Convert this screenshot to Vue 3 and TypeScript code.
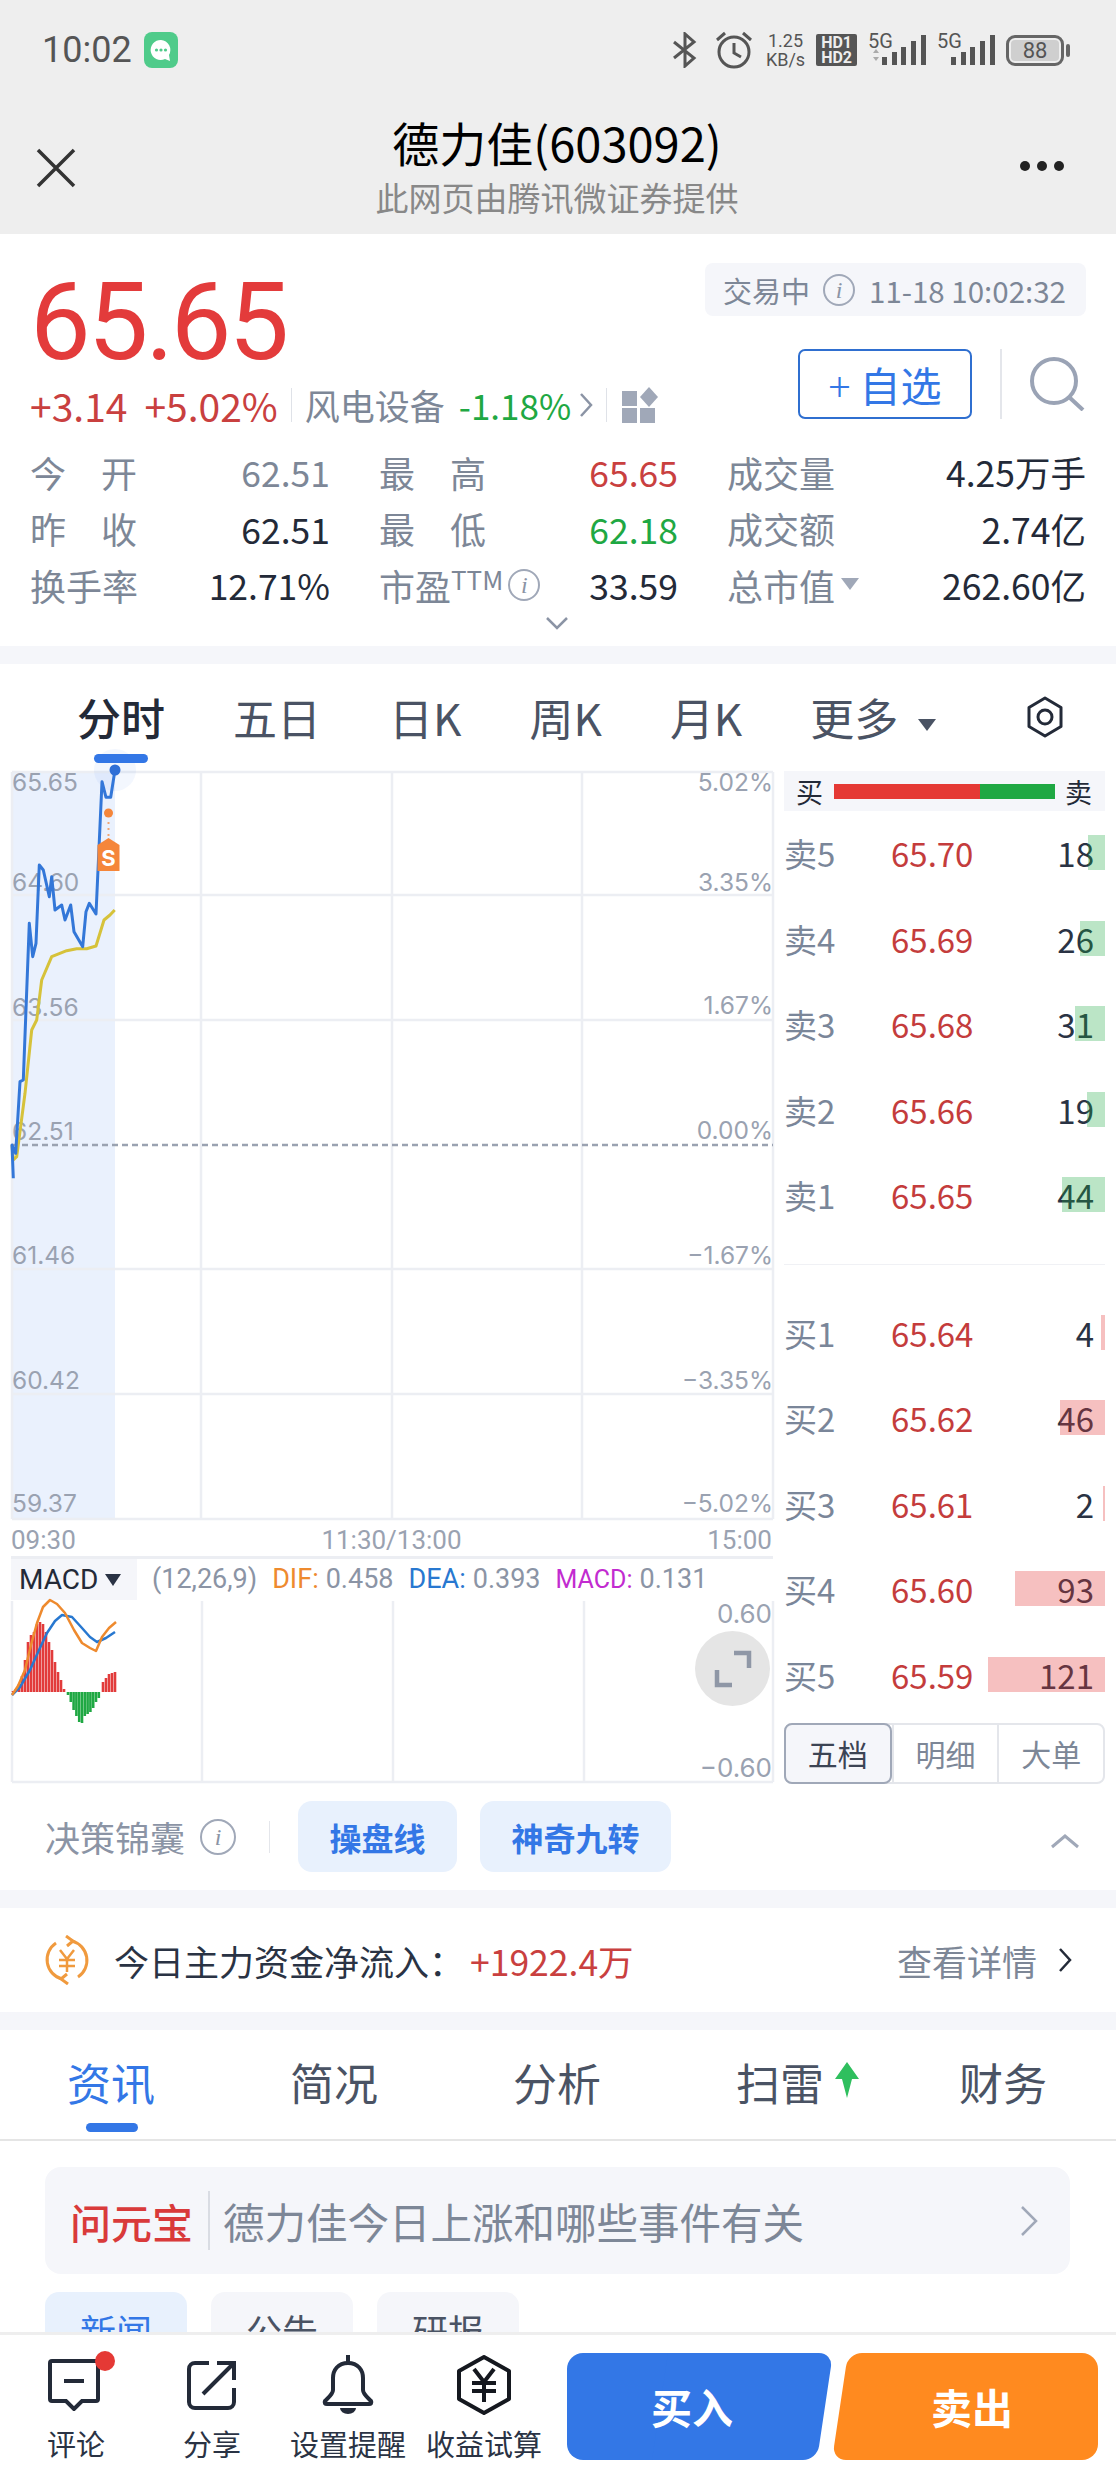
<script setup lang="ts">
// zoomed-crop coords of the intraday lines, converted to page px below
const toPage = (pts: number[][]) =>
  pts.map(([x, y]) => `${(x / 3).toFixed(1)},${(y / 3 + 660).toFixed(1)}`).join(" ");

const priceLine = toPage([
  [40, 1555], [36, 1455], [47, 1480], [60, 1265], [70, 1260], [88, 790], [98, 890], [108, 850],
  [118, 615], [130, 630], [148, 710], [155, 650], [165, 750], [185, 735], [195, 780], [212, 735],
  [222, 815], [248, 860], [258, 755], [268, 730], [288, 762], [306, 365], [318, 412], [332, 412],
  [344, 335],
]);
const avgLine = toPage([
  [36, 1455], [40, 1500], [50, 1490], [75, 1300], [95, 1110], [110, 1080], [125, 960], [155, 890],
  [200, 872], [230, 866], [260, 866], [288, 858], [312, 780], [330, 765], [344, 750],
]);

const hLines = [895, 1020, 1269, 1394];
const vLines = [201, 392, 582];
const leftLabels = [
  ["65.65", 782], ["64.60", 882], ["63.56", 1007], ["62.51", 1131],
  ["61.46", 1255], ["60.42", 1380], ["59.37", 1503],
] as const;
const rightLabels = [
  ["5.02%", 782], ["3.35%", 882], ["1.67%", 1005], ["0.00%", 1130],
  ["−1.67%", 1255], ["−3.35%", 1380], ["−5.02%", 1503],
] as const;

const stats = [
  [{ l: "今开", v: "62.51", c: "muted", j: true }, { l: "最高", v: "65.65", c: "up", j: true }, { l: "成交量", v: "4.25万手", c: "" }],
  [{ l: "昨收", v: "62.51", c: "", j: true }, { l: "最低", v: "62.18", c: "down", j: true }, { l: "成交额", v: "2.74亿", c: "" }],
];

const sells = [
  ["卖5", "65.70", 18], ["卖4", "65.69", 26], ["卖3", "65.68", 31], ["卖2", "65.66", 19], ["卖1", "65.65", 44],
] as const;
const buys = [
  ["买1", "65.64", 4], ["买2", "65.62", 46], ["买3", "65.61", 2], ["买4", "65.60", 93], ["买5", "65.59", 121],
] as const;

// MACD histogram: [x, height], positive is up
const hist: number[][] = [];
[1, 3, 8, 16, 32, 50, 57, 60, 68, 70, 68, 60, 50, 42, 30, 20, 12, 3].forEach((h, i) => hist.push([13 + i * 3, h]));
[3, 10, 18, 24, 30, 31, 24, 22, 20, 16, 10, 6].forEach((h, i) => hist.push([68 + i * 2.8, -h]));
[10, 14, 18, 19, 20].forEach((h, i) => hist.push([103 + i * 3, h]));

const difLine = "12,1695 18,1686 25,1670 31,1645 37,1623 43,1607 50,1600 57,1604 65,1613 74,1630 82,1643 90,1648 96,1651 102,1637 109,1628 116,1622";
const deaLine = "12,1695 20,1687 30,1670 39,1650 47,1633 55,1621 62,1615 72,1617 82,1628 90,1637 97,1642 106,1638 115,1632";

const tabs = ["分时", "五日", "日K", "周K", "月K"];
const newsTabs = ["资讯", "简况", "分析", "扫雷", "财务"];
</script>

<template>
  <div class="page">
    <div class="main">
      <header class="top">
        <div class="status">
          <span class="clock">10:02</span>
          <svg class="app" width="34" height="36" viewBox="0 0 34 36">
            <rect width="34" height="36" rx="8" fill="#4fcb8a" />
            <path d="M17 8a10 10 0 1 0 4 19l5 2-1-6a10 10 0 0 0-8-15z" fill="#fff" />
            <circle cx="12.500" cy="18" r="1.600" fill="#4fcb8a" />
            <circle cx="17" cy="18" r="1.600" fill="#4fcb8a" />
            <circle cx="21.500" cy="18" r="1.600" fill="#4fcb8a" />
          </svg>
          <span class="grow"></span>
          <svg class="bt" width="28" height="36" viewBox="0 0 28 36" fill="none" stroke="#555" stroke-width="3">
            <path d="M3 10l20 16-9 8V2l9 8L3 26" />
          </svg>
          <svg width="42" height="40" viewBox="0 0 42 40" fill="none" stroke="#555" stroke-width="3">
            <circle cx="21" cy="22" r="15" />
            <path d="M21 13v10l7 4M4 10l8-7M38 10l-8-7" />
          </svg>
          <span class="speed">1.25<br />KB/s</span>
          <span class="hd">HD1<br />HD2</span>
          <svg class="signal" width="58" height="34" viewBox="0 0 58 34" fill="#555">
            <text x="0" y="15" class="five">5G</text>
            <path d="M5 20l3-4 3 4zM5 24l3 4 3-4z" fill="#aaa" />
            <rect x="14" y="24" width="5" height="8" /><rect x="24" y="19" width="5" height="13" />
            <rect x="33" y="14" width="5" height="18" /><rect x="43" y="8" width="5" height="24" />
            <rect x="53" y="2" width="5" height="30" />
          </svg>
          <svg class="signal" width="58" height="34" viewBox="0 0 58 34" fill="#555">
            <text x="0" y="15" class="five">5G</text>
            <rect x="14" y="24" width="5" height="8" /><rect x="24" y="19" width="5" height="13" />
            <rect x="33" y="14" width="5" height="18" /><rect x="43" y="8" width="5" height="24" />
            <rect x="53" y="2" width="5" height="30" />
          </svg>
          <span class="battery"><span class="level">88</span></span>
        </div>
        <div class="titlebar">
          <svg class="close" width="40" height="40" viewBox="0 0 40 40" stroke="#333" stroke-width="3.500">
            <path d="M2 2l36 36M38 2L2 38" />
          </svg>
          <div class="titles">
            <div class="title">德力佳(603092)</div>
            <div class="subtitle">此网页由腾讯微证券提供</div>
          </div>
          <div class="dots"><i></i><i></i><i></i></div>
        </div>
      </header>

      <section class="quote">
        <div class="quote-head">
          <div>
            <div class="price">65.65</div>
            <div class="change">
              <span class="up big">+3.14</span>
              <span class="up big pct">+5.02%</span>
              <i class="rule"></i>
              <span class="sector">风电设备</span>
              <span class="down sector-pct">-1.18%</span>
              <svg width="14" height="26" viewBox="0 0 14 26" fill="none" stroke="#8b94a5" stroke-width="2.500">
                <path d="M2 2l10 11L2 24" />
              </svg>
              <i class="rule second"></i>
              <svg width="38" height="36" viewBox="0 0 38 36" fill="#a0a8b8">
                <rect y="4" width="15" height="15" /><rect y="21" width="15" height="15" />
                <rect x="18" y="21" width="15" height="15" />
                <path d="M27 0l9 10-9 10-9-10z" />
              </svg>
            </div>
          </div>
          <div class="quote-side">
            <div class="trade-time">
              <span>交易中</span>
              <span class="info small"><em>i</em></span>
              <span class="stamp">11-18 10:02:32</span>
            </div>
            <div class="actions">
              <button class="watch"><span class="plus">+</span> 自选</button>
              <i class="vrule"></i>
              <svg width="56" height="54" viewBox="0 0 56 54" fill="none" stroke="#9aa3b5" stroke-width="4">
                <circle cx="25" cy="24" r="22" />
                <path d="M40 40l14 13" />
              </svg>
            </div>
          </div>
        </div>

        <div class="stats">
          <template v-for="(row, r) in stats" :key="r">
            <div v-for="cell in row" :key="cell.l" class="stat">
              <span class="label" :class="{ spread: cell.j }">{{ cell.l }}</span>
              <span class="value" :class="cell.c">{{ cell.v }}</span>
            </div>
          </template>
          <div class="stat">
            <span class="label">换手率</span><span class="value">12.71%</span>
          </div>
          <div class="stat">
            <span class="label pe">市盈<sup>TTM</sup><span class="info small"><em>i</em></span></span>
            <span class="value">33.59</span>
          </div>
          <div class="stat">
            <span class="label">总市值<i class="caret grey"></i></span><span class="value">262.60亿</span>
          </div>
        </div>
        <svg class="more" width="24" height="14" viewBox="0 0 24 14" fill="none" stroke="#8b94a5" stroke-width="2.500">
          <path d="M2 2l10 10L22 2" />
        </svg>
      </section>

      <section class="market">
        <nav class="chart-tabs">
          <span v-for="(t, i) in tabs" :key="t" class="chart-tab" :class="{ on: i === 0 }">{{ t }}</span>
          <span class="chart-tab">更多<i class="caret dark"></i></span>
          <svg class="gear" width="40" height="42" viewBox="0 0 40 42" fill="none" stroke="#232a38" stroke-width="3">
            <path d="M20 2l16 9.500v19L20 40 4 30.500v-19z" stroke-linejoin="round" />
            <circle cx="20" cy="21" r="7" />
          </svg>
        </nav>

        <div class="market-body">
          <div class="charts">
            <svg class="price-chart" width="784" height="759" viewBox="0 766 784 759">
              <rect x="12" y="772" width="103" height="747" fill="#eaf1fd" />
              <g stroke="#eceef3" stroke-width="2.500">
                <line v-for="y in hLines" :key="y" x1="12" x2="773" :y1="y" :y2="y" />
                <line x1="12" x2="773" y1="1519" y2="1519" />
                <line x1="12" x2="773" y1="772" y2="772" />
                <line v-for="x in vLines" :key="x" y1="772" y2="1519" :x1="x" :x2="x" />
                <line x1="773" x2="773" y1="772" y2="1519" />
                <line x1="12" x2="12" y1="772" y2="1519" />
              </g>
              <line x1="12" x2="773" y1="1145" y2="1145" stroke="#9aa2b1" stroke-width="2.500" stroke-dasharray="6 4" />
              <g class="axis">
                <text v-for="[t, y] in leftLabels" :key="t" x="12" :y="y + 9">{{ t }}</text>
                <text v-for="[t, y] in rightLabels" :key="t" x="773" :y="y + 9" text-anchor="end">{{ t }}</text>
              </g>
              <polyline :points="avgLine" fill="none" stroke="#d6c23a" stroke-width="3" stroke-linejoin="round" />
              <polyline :points="priceLine" fill="none" stroke="#3377d8" stroke-width="3" stroke-linejoin="round" />
              <circle cx="115" cy="770" r="21" fill="#3377e6" opacity=".06" />
              <circle cx="115" cy="770" r="5.500" fill="#2f6fd6" />
              <circle cx="108.500" cy="813" r="4.500" fill="#f5863a" />
              <line x1="108.500" x2="108.500" y1="822" y2="838" stroke="#f5863a" stroke-width="2" stroke-dasharray="2 4" opacity=".7" />
              <path d="M108.500 838l11 7v26h-22v-26z" fill="#f5863a" />
              <text x="108.500" y="866" class="tag">S</text>
            </svg>

            <div class="time-axis"><span>09:30</span><span>11:30/13:00</span><span>15:00</span></div>

            <div class="macd-head">
              <span class="macd-select">MACD<i class="caret dark small"></i></span>
              <span class="macd-text">(12,26,9)</span>
              <span class="macd-text dif">DIF:</span><span class="macd-text">0.458</span>
              <span class="macd-text dea">DEA:</span><span class="macd-text">0.393</span>
              <span class="macd-text mac">MACD:</span><span class="macd-text">0.131</span>
            </div>

            <div class="macd-chart">
              <svg width="784" height="183" viewBox="0 1601 784 183">
                <g stroke="#eceef3" stroke-width="2.500">
                  <line x1="12" x2="773" y1="1782" y2="1782" />
                  <line x1="12" x2="12" y1="1601" y2="1782" />
                  <line v-for="x in [202, 393, 584, 773]" :key="x" y1="1601" y2="1782" :x1="x" :x2="x" />
                </g>
                <g stroke-width="2.600">
                  <line
                    v-for="([x, h], i) in hist"
                    :key="i"
                    :x1="x"
                    :x2="x"
                    y1="1692"
                    :y2="1692 - h"
                    :stroke="h > 0 ? '#e23b3b' : '#1fa843'"
                  />
                </g>
                <polyline :points="deaLine" fill="none" stroke="#2878d0" stroke-width="2.500" stroke-linejoin="round" />
                <polyline :points="difLine" fill="none" stroke="#ee8a2e" stroke-width="2.500" stroke-linejoin="round" />
                <g class="axis big">
                  <text x="772" y="1623" text-anchor="end">0.60</text>
                  <text x="772" y="1777" text-anchor="end">−0.60</text>
                </g>
              </svg>
              <button class="expand">
                <svg width="36" height="36" viewBox="0 0 36 36" fill="none" stroke="#8f97a6" stroke-width="4.500">
                  <path d="M19 2h15v15M2 19v15h15" />
                </svg>
              </button>
            </div>
          </div>

          <aside class="book">
            <div class="ratio">
              <span>买</span>
              <div class="ratio-bar"><i></i><b></b></div>
              <span>卖</span>
            </div>
            <div class="side">
              <div v-for="[l, p, q] in sells" :key="l" class="level-row">
                <span class="lv">{{ l }}</span><span class="lp">{{ p }}</span><span class="lq">{{ q }}</span>
                <i class="vol green" :style="{ width: q * 0.97 + 'px' }"></i>
              </div>
            </div>
            <div class="split"></div>
            <div class="side">
              <div v-for="[l, p, q] in buys" :key="l" class="level-row">
                <span class="lv">{{ l }}</span><span class="lp">{{ p }}</span><span class="lq">{{ q }}</span>
                <i class="vol red" :style="{ width: q * 0.97 + 'px' }"></i>
              </div>
            </div>
            <div class="seg">
              <span class="active">五档</span><span>明细</span><span>大单</span>
            </div>
          </aside>
        </div>

        <div class="tips">
          <span class="tips-label">决策锦囊</span>
          <span class="info"><em>i</em></span>
          <i class="tips-rule"></i>
          <button class="chip">操盘线</button>
          <button class="chip wide">神奇九转</button>
          <svg class="collapse" width="30" height="16" viewBox="0 0 30 16" fill="none" stroke="#a0a8b8" stroke-width="3">
            <path d="M2 14L15 3l13 11" />
          </svg>
        </div>
      </section>

      <section class="flow">
        <svg width="46" height="50" viewBox="0 0 46 50" fill="none" stroke="#f09a3e" stroke-width="3">
          <path d="M28 6A20 20 0 0 1 34 42M18 44A20 20 0 0 1 12 8" />
          <path d="M22 1l7 5-6 5M24 49l-7-5 6-5" />
          <path d="M16 15l7 9 7-9M23 24v13M15 25h16M15 31h16" stroke-width="2.500" />
        </svg>
        <span class="flow-text">今日主力资金净流入：</span>
        <span class="flow-num">+1922.4万</span>
        <span class="grow"></span>
        <span class="flow-more">查看详情</span>
        <svg width="14" height="26" viewBox="0 0 14 26" fill="none" stroke="#232a38" stroke-width="2.500">
          <path d="M2 2l10 11L2 24" />
        </svg>
      </section>

      <section class="news">
        <nav class="news-tabs">
          <span v-for="(t, i) in newsTabs" :key="t" class="news-tab" :class="{ on: i === 0 }">
            {{ t }}
            <svg v-if="t === '扫雷'" class="arrow" width="26" height="36" viewBox="0 0 26 36">
              <path d="M13 0l12 17h-7l-5 19-5-19H1z" fill="#2fbf5e" />
            </svg>
          </span>
        </nav>
        <div class="ask">
          <span class="ask-brand">问元宝</span>
          <i class="ask-rule"></i>
          <span class="ask-text">德力佳今日上涨和哪些事件有关</span>
          <span class="grow"></span>
          <svg width="18" height="32" viewBox="0 0 18 32" fill="none" stroke="#a0a8b8" stroke-width="2.500">
            <path d="M2 2l14 14L2 30" />
          </svg>
        </div>
        <div class="subtabs">
          <span class="on">新闻</span><span>公告</span><span>研报</span>
        </div>
      </section>
    </div>

    <footer class="bar">
      <div class="bar-item">
        <span class="bar-icon">
          <svg width="56" height="52" viewBox="0 0 56 52" fill="none" stroke="#232a38" stroke-width="4">
            <path d="M4 2h44a2 2 0 0 1 2 2v36a2 2 0 0 1-2 2H34l-8 8-8-8H4a2 2 0 0 1-2-2V4a2 2 0 0 1 2-2z" />
            <path d="M16 22h20" />
          </svg>
          <i class="badge"></i>
        </span>
        <span class="bar-label">评论</span>
      </div>
      <div class="bar-item">
        <span class="bar-icon">
          <svg width="50" height="50" viewBox="0 0 50 50" fill="none" stroke="#232a38" stroke-width="4">
            <path d="M22 3H8a6 6 0 0 0-6 6v33a6 6 0 0 0 6 6h33a6 6 0 0 0 6-6V28" />
            <path d="M16 34L46 4M30 3h17v17" />
          </svg>
        </span>
        <span class="bar-label">分享</span>
      </div>
      <div class="bar-item">
        <span class="bar-icon">
          <svg width="56" height="60" viewBox="0 0 56 60" fill="none" stroke="#232a38" stroke-width="4">
            <path d="M28 8c-10 0-15 7-15 15v12c0 4-4 7-8 11-1 2 0 3 2 3h42c2 0 3-1 2-3-4-4-8-7-8-11V23c0-8-5-15-15-15z" />
            <path d="M28 0v8" />
            <path d="M20 53h16a8 6 0 0 1-16 0z" fill="#232a38" stroke="none" />
          </svg>
        </span>
        <span class="bar-label">设置提醒</span>
      </div>
      <div class="bar-item">
        <span class="bar-icon">
          <svg width="54" height="60" viewBox="0 0 54 60" fill="none" stroke="#15181f" stroke-width="4">
            <path d="M27 2l25 14v28L27 58 2 44V16z" stroke-linejoin="round" />
            <path d="M17 14l10 13 10-13M27 27v20M15 28h24M15 36h24" />
          </svg>
        </span>
        <span class="bar-label">收益试算</span>
      </div>
      <button class="trade buy-btn"><span>买入</span></button>
      <button class="trade sell-btn"><span>卖出</span></button>
    </footer>
  </div>
</template>

<style>
html,
body {
  margin: 0;
  background: #fff;
}
</style>

<style scoped>
.page {
  width: 1116px;
  height: 2480px;
  display: flex;
  flex-direction: column;
  overflow: hidden;
  background: #f5f6fa;
  font-family: "Noto Sans CJK SC", "Noto Sans", sans-serif;
  color: #232a38;
}
.main {
  flex: 1;
  min-height: 0;
  overflow: hidden;
}
.grow {
  flex: 1;
}
i,
em {
  font-style: normal;
}

/* top */
.top {
  height: 234px;
  background: #eeeeee;
}
.status {
  height: 100px;
  display: flex;
  align-items: center;
  gap: 11px;
  padding: 0 52px 0 42px;
  box-sizing: border-box;
  color: #555;
}
.clock {
  font: 36px/1 Roboto, sans-serif;
}
.app {
  margin-left: 1px;
}
.bt {
  margin-right: 3px;
}
.speed {
  font: 18px/19px Roboto, sans-serif;
  text-align: center;
}
.hd {
  background: #555;
  color: #eee;
  font: 700 16px/15px Roboto, sans-serif;
  padding: 1px 5px;
  border-radius: 2px;
}
.signal {
  overflow: visible;
}
.five {
  font: 20px Roboto, sans-serif;
}
.battery {
  width: 58px;
  height: 31px;
  border: 3px solid #666;
  border-radius: 9px;
  box-sizing: border-box;
  padding: 2px;
  display: flex;
  position: relative;
}
.battery::after {
  content: "";
  position: absolute;
  right: -9px;
  top: 6px;
  width: 4px;
  height: 13px;
  background: #666;
  border-radius: 2px;
}
.level {
  flex: 1;
  background: #cfcfcf;
  border-radius: 4px;
  font: 22px/21px Roboto, sans-serif;
  text-align: center;
  color: #555;
}
.titlebar {
  display: flex;
  align-items: flex-start;
  justify-content: space-between;
  padding: 0 52px 0 36px;
}
.close {
  margin-top: 48px;
}
.titles {
  text-align: center;
  margin-left: 18px;
}
.title {
  font-size: 47px;
  line-height: 60px;
  margin-top: 12px;
  color: #000;
}
.subtitle {
  font-size: 33px;
  line-height: 44px;
  color: #888;
  margin-top: 3px;
}
.dots {
  display: flex;
  gap: 7px;
  margin-top: 61px;
}
.dots i {
  width: 10px;
  height: 10px;
  border-radius: 50%;
  background: #222;
}

/* quote */
.quote {
  height: 412px;
  background: #fff;
  padding: 0 30px 0 30px;
  box-sizing: border-box;
  position: relative;
}
.quote-head {
  display: flex;
  justify-content: space-between;
  height: 209.500px;
}
.price {
  font: 108px/108px Roboto, sans-serif;
  letter-spacing: -3px;
  color: #e33b3b;
  margin: 34px 0 0 0;
}
.change {
  display: flex;
  align-items: center;
  font-size: 35px;
  line-height: 50px;
  margin-top: 4px;
  white-space: nowrap;
}
.up {
  color: #c9403f;
}
.big {
  font-size: 39px;
}
.down {
  color: #1fa843;
}
.muted {
  color: #7d8797;
}
.pct {
  margin-left: 17px;
}
.rule {
  width: 1px;
  height: 34px;
  background: #dfe2e8;
  margin: 0 13px;
}
.rule.second {
  margin: 0 15px 0 13px;
}
.sector {
  color: #7d8797;
  font-size: 35px;
}
.sector-pct {
  margin: 0 8px 0 14px;
}
.quote-side {
  width: 381px;
  padding-top: 29px;
}
.trade-time {
  height: 53px;
  background: #f5f6fa;
  border-radius: 8px;
  display: flex;
  align-items: center;
  padding-left: 18px;
  font-size: 29px;
  color: #7d8797;
  gap: 13px;
  white-space: nowrap;
}
.stamp {
  font-size: 29.500px;
  margin-left: 1px;
}
.info {
  width: 36px;
  height: 36px;
  border: 2.500px solid #a0a8b8;
  border-radius: 50%;
  box-sizing: border-box;
  display: inline-flex;
  align-items: center;
  justify-content: center;
  color: #8b94a5;
  flex: none;
}
.info em {
  font: italic 24px/1 "Liberation Serif", serif;
}
.info.small {
  width: 32px;
  height: 32px;
}
.actions {
  display: flex;
  align-items: center;
  margin: 33px 0 0 93px;
}
.watch {
  width: 174px;
  height: 70px;
  border: 2px solid #2f6fd0;
  border-radius: 7px;
  background: #fff;
  color: #3377e6;
  font: 41px/1 "Noto Sans CJK SC", sans-serif;
  padding: 0;
  flex: none;
}
.plus {
  font-weight: 300;
}
.vrule {
  width: 2px;
  height: 70px;
  background: #e4e6eb;
  margin: 0 27px 0 28px;
  flex: none;
}
.stats {
  display: grid;
  grid-template-columns: 300px 299px 359px;
  column-gap: 49px;
  grid-auto-rows: 56.500px;
}
.stat {
  display: flex;
  justify-content: space-between;
  align-items: center;
  font-size: 35.500px;
  white-space: nowrap;
}
.label {
  color: #7d8797;
  font-size: 36px;
  width: 107px;
  display: inline-block;
  position: relative;
}
.label.spread {
  text-align-last: justify;
}
.pe {
  display: flex;
  align-items: center;
}
.pe sup {
  font-size: 26px;
  line-height: 1;
  margin-top: -12px;
  vertical-align: baseline;
}
.pe .info {
  margin-left: 5px;
}
.caret {
  display: inline-block;
  border-left: 9px solid transparent;
  border-right: 9px solid transparent;
  border-top: 12px solid #a0a8b8;
}
.caret.grey {
  position: absolute;
  left: 114px;
  top: 19px;
}
.caret.dark {
  border-top-color: #4a5364;
  margin-left: 20px;
  vertical-align: 5px;
}
.caret.small {
  margin-left: 7px;
  vertical-align: 2px;
  border-top-color: #2a3344;
  border-left-width: 8px;
  border-right-width: 8px;
}
.more {
  position: absolute;
  left: 545px;
  top: 382px;
}

/* chart */
.market {
  margin-top: 18px;
  background: #fff;
  height: 1226px;
  overflow: hidden;
}
.chart-tabs {
  height: 102px;
  box-sizing: border-box;
  padding: 4px 0 0 77px;
  display: flex;
  align-items: center;
  gap: 68px;
  font-size: 44px;
  color: #4a5364;
  position: relative;
}
.chart-tab {
  position: relative;
  line-height: 56px;
  white-space: nowrap;
}
.chart-tab.on {
  color: #232a38;
  font-weight: 500;
}
.chart-tab.on::after {
  content: "";
  position: absolute;
  left: 17px;
  right: 17px;
  bottom: -18px;
  height: 9px;
  border-radius: 5px;
  background: #3377e6;
}
.gear {
  position: absolute;
  left: 1025px;
  top: 32px;
}
.market-body {
  display: flex;
}
.charts {
  width: 784px;
  flex: none;
}
.price-chart,
.macd-chart svg {
  display: block;
  overflow: visible;
}
.axis text {
  font: 24.500px Inter, sans-serif;
  fill: #9aa2b1;
}
.axis.big text {
  font-size: 26px;
}
.tag {
  font: 700 22px Inter, sans-serif;
  fill: #fff;
  text-anchor: middle;
}
.time-axis {
  height: 29px;
  margin: 0 12px 2px 11px;
  display: flex;
  justify-content: space-between;
  align-items: center;
  font: 26px/1 Roboto, sans-serif;
  color: #9aa2b1;
}
.macd-head {
  height: 41px;
  border-top: 3px solid #eceef3;
  display: flex;
  align-items: center;
  font: 27px/1 Roboto, sans-serif;
  margin-left: 11px;
  width: 762px;
  color: #8b94a5;
  white-space: nowrap;
}
.macd-select {
  width: 126px;
  height: 100%;
  background: #f5f6fa;
  padding-left: 8px;
  box-sizing: border-box;
  display: flex;
  align-items: center;
  color: #232a38;
  font-size: 28px;
  margin-right: 15px;
}
.macd-text {
  margin-right: 7px;
}
.dif {
  color: #ee8a2e;
  margin-left: 8px;
}
.dea {
  color: #2878d0;
  margin-left: 8px;
}
.mac {
  color: #c22bd0;
  margin-left: 8px;
  font-size: 25px;
}
.macd-chart {
  position: relative;
  height: 184px;
  margin-top: 1px;
}
.expand {
  position: absolute;
  left: 695px;
  top: 30px;
  width: 75px;
  height: 75px;
  border-radius: 50%;
  border: 0;
  background: #e5e5e5;
  display: flex;
  align-items: center;
  justify-content: center;
  padding: 0;
}

/* order book */
.book {
  width: 321px;
  margin: 5px 0 0 0;
}
.ratio {
  height: 40px;
  background: #f5f6fa;
  display: flex;
  align-items: center;
  justify-content: space-between;
  padding: 0 13px 0 12px;
  font-size: 27px;
  color: #232a38;
  line-height: 1;
  margin-bottom: -0.500px;
}
.ratio-bar {
  width: 221px;
  height: 15px;
  display: flex;
}
.ratio-bar i {
  flex: 146;
  background: #e53935;
}
.ratio-bar b {
  flex: 75;
  background: #1fa843;
}
.level-row {
  display: flex;
  align-items: center;
  position: relative;
  height: 85.500px;
  font-size: 33px;
  padding: 0 11px 0 0;
  box-sizing: border-box;
}
.lv {
  width: 107px;
  color: #7a8699;
}
.lp {
  color: #c43c3c;
}
.lq {
  margin-left: auto;
  color: #2a3344;
}
.vol {
  position: absolute;
  right: 0;
  top: 50%;
  height: 35px;
  margin-top: -18px;
}
.vol.green {
  background: rgba(31, 168, 67, 0.3);
}
.vol.red {
  background: rgba(227, 59, 59, 0.32);
}
.split {
  height: 1px;
  background: #f0f1f5;
  margin-top: 26px;
  margin-bottom: 25px;
}
.seg {
  height: 61px;
  margin-top: 5px;
  display: flex;
  border: 2px solid #e4e6eb;
  border-radius: 8px;
  box-sizing: border-box;
  font-size: 30px;
  color: #7d8797;
}
.seg span {
  flex: 1;
  display: flex;
  align-items: center;
  justify-content: center;
  border-left: 2px solid #e4e6eb;
}
.seg .active {
  background: #f5f6fa;
  border: 2px solid #a0a8b8;
  margin: -2px 0 -2px -2px;
  border-radius: 8px;
  color: #3c4454;
}
.tips {
  margin-top: 16px;
  padding-left: 45px;
  display: flex;
  align-items: center;
  height: 71px;
  position: relative;
}
.tips-label {
  font-size: 35px;
  color: #8b94a5;
  margin-right: 15px;
}
.tips-rule {
  width: 1px;
  height: 32px;
  background: #e4e6eb;
  margin: 0 28px 0 33px;
}
.chip {
  height: 71px;
  width: 159px;
  border: 0;
  border-radius: 14px;
  background: #e8f1fd;
  color: #3377e6;
  font: 700 32px/1 "Noto Sans CJK SC", sans-serif;
  padding: 0;
}
.chip.wide {
  width: 191px;
  margin-left: 23px;
}
.collapse {
  position: absolute;
  left: 1050px;
  top: 32px;
}

/* fund flow */
.flow {
  margin-top: 18px;
  height: 104px;
  background: #fff;
  display: flex;
  align-items: center;
  padding: 0 44px;
  white-space: nowrap;
}
.flow-text {
  font-size: 35px;
  margin-left: 24px;
  color: #2a3344;
}
.flow-num {
  font-size: 35.500px;
  color: #c9403f;
  margin-left: 6px;
}
.flow-more {
  font-size: 35px;
  color: #7d8797;
  margin-right: 21px;
}

/* news */
.news {
  margin-top: 18px;
  background: #fff;
  height: 320px;
}
.news-tabs {
  height: 109px;
  border-bottom: 2px solid #e5e5e5;
  display: flex;
  padding-left: 67px;
  gap: 135px;
  font-size: 44px;
  color: #4a5364;
  line-height: 104px;
}
.news-tab {
  position: relative;
  width: 88px;
  white-space: nowrap;
}
.news-tab.on {
  color: #3377e6;
}
.news-tab.on::after {
  content: "";
  position: absolute;
  left: 19px;
  right: 17px;
  top: 93px;
  height: 9px;
  border-radius: 5px;
  background: #3377e6;
}
.arrow {
  position: absolute;
  left: 98px;
  top: 32px;
}
.ask {
  margin: 26px 46px 0 45px;
  height: 107px;
  background: #f5f6fa;
  border-radius: 16px;
  display: flex;
  align-items: center;
  padding: 0 32px 0 25px;
  white-space: nowrap;
}
.ask-brand {
  font-size: 41px;
  font-weight: 500;
  color: #d93a3a;
}
.ask-rule {
  width: 2px;
  height: 59px;
  background: #d9dce3;
  margin: 0 13px 0 15px;
}
.ask-text {
  font-size: 41.500px;
  color: #7d8797;
}
.subtabs {
  display: flex;
  gap: 24px;
  margin: 18px 0 0 45px;
}
.subtabs span {
  width: 142px;
  height: 70px;
  padding-top: 13px;
  box-sizing: border-box;
  background: #f5f6fa;
  border-radius: 14px;
  text-align: center;
  font-size: 36px;
  line-height: 50px;
  color: #4a5364;
}
.subtabs .on {
  background: #e8f1fd;
  color: #3377e6;
}

/* bottom bar */
.bar {
  height: 148px;
  flex: none;
  box-sizing: border-box;
  background: #fff;
  border-top: 3px solid #eeeeee;
  display: flex;
  padding-left: 8px;
  position: relative;
}
.bar-item {
  width: 136px;
  display: flex;
  flex-direction: column;
  align-items: center;
}
.bar-icon {
  height: 62px;
  margin-top: 19px;
  display: flex;
  align-items: center;
  position: relative;
}
.badge {
  position: absolute;
  right: -11px;
  top: -3px;
  width: 20px;
  height: 20px;
  border-radius: 50%;
  background: #e53935;
}
.bar-label {
  font-size: 29px;
  line-height: 40px;
  margin-top: 7px;
  white-space: nowrap;
  color: #2a3344;
}
.trade {
  position: relative;
  height: 107px;
  margin-top: 18px;
  border: 0;
  background: transparent;
  color: #fff;
  font: 700 41px/1 "Noto Sans CJK SC", sans-serif;
  padding: 0;
  flex: none;
}
.trade span {
  position: relative;
  z-index: 1;
}
.trade::before,
.trade::after {
  content: "";
  position: absolute;
  top: 0;
  bottom: 0;
  background: var(--fill);
}
.buy-btn {
  --fill: #3377e6;
  width: 258px;
  margin-left: 15px;
  padding-right: 8px;
}
.buy-btn::before {
  left: 0;
  right: 40%;
  border-radius: 16px 0 0 16px;
}
.buy-btn::after {
  left: 40%;
  right: 0;
  transform: skewX(-8.500deg);
  border-radius: 0 14px 14px 0;
  margin-left: -10px;
}
.sell-btn {
  --fill: #ff8a1f;
  width: 258px;
  margin-left: 15px;
  padding-left: 6px;
}
.sell-btn::before {
  left: 0;
  right: 40%;
  transform: skewX(-8.500deg);
  border-radius: 14px 0 0 14px;
  margin-right: -10px;
}
.sell-btn::after {
  left: 40%;
  right: 0;
  border-radius: 0 16px 16px 0;
}
</style>
